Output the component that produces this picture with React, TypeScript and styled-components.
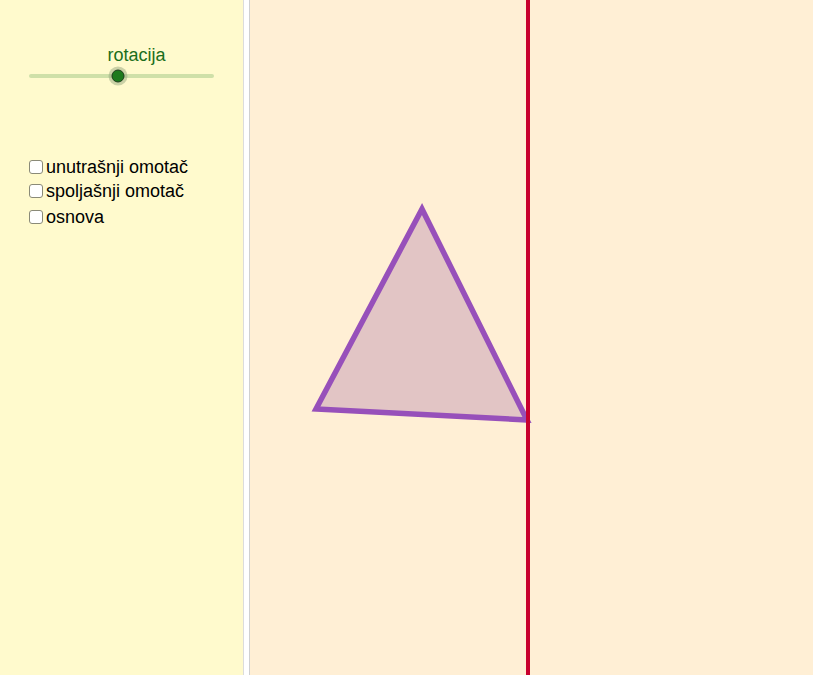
import * as React from "react";
import styled, {createGlobalStyle} from "styled-components";

const GlobalStyle = createGlobalStyle`
	html, body {
		margin: 0;
		padding: 0;
		overflow: hidden;
	}
	body {
		font-family: "Liberation Sans", Arial, sans-serif;
	}
`

const Page = styled.div`
	display: flex;
	width: 813px;
	height: 675px;
`

const SidePanel = styled.div`
	width: 243px;
	flex-shrink: 0;
	background: #fffacd;
	display: flex;
	flex-direction: column;
`

const Divider = styled.div`
	width: 5px;
	flex-shrink: 0;
	background: #ffffff;
	border-left: 1px solid #dcdcdc;
	border-right: 1px solid #d0d0d0;
`

const Canvas = styled.div`
	flex: 1;
	background: #ffefd5;
	position: relative;
	overflow: hidden;
`

const SliderBlock = styled.div`
	margin: 45px 0 0 29px;
	width: 185px;
	display: flex;
	flex-direction: column;
	align-items: center;
`

const SliderLabel = styled.span`
	color: #1b6e1b;
	font-size: 18px;
	line-height: 20px;
	margin-left: 30px;
`

const Track = styled.div`
	position: relative;
	margin-top: 9px;
	width: 185px;
	height: 4px;
	border-radius: 2px;
	background: #cfe0a8;
`

const Knob = styled.div<{ $pos: number }>`
	position: absolute;
	top: 50%;
	left: ${(p) => p.$pos}px;
	width: 11px;
	height: 11px;
	border-radius: 50%;
	background: #1d7a1d;
	border: 1px solid #1a3d1a;
	box-shadow: 0 0 0 3px rgba(140, 160, 120, 0.45);
	transform: translate(-50%, -50%);
`

const Options = styled.div`
	margin: 79px 0 0 29px;
	display: flex;
	flex-direction: column;
	gap: 4px;
`

const OptionRow = styled.label<{ $extra?: number }>`
	display: flex;
	align-items: center;
	gap: 3px;
	margin-top: ${(p) => p.$extra || 0}px;
	font-size: 18px;
	line-height: 20px;
	color: #000;
`

const Box = styled.span`
	width: 12px;
	height: 12px;
	border: 1px solid #8a8a78;
	border-radius: 3px;
	background: #ffffff;
	flex-shrink: 0;
`

const options = ["unutrašnji omotač", "spoljašnji omotač", "osnova"];

const App = () => {
	return (
		<Page>
			<GlobalStyle />

			<SidePanel>
				<SliderBlock>
					<SliderLabel>rotacija</SliderLabel>
					<Track>
						<Knob $pos={89} />
					</Track>
				</SliderBlock>

				<Options>
					{options.map((o, i) => (
						<OptionRow key={o} $extra={i === 2 ? 2 : 0}>
							<Box />
							{o}
						</OptionRow>
					))}
				</Options>
			</SidePanel>

			<Divider />

			<Canvas>
				<svg width="563" height="675" viewBox="0 0 563 675">
					<polygon
						points="172,209 66,409 277,420"
						fill="rgba(165,110,165,0.32)"
						stroke="#9750ba"
						strokeWidth="5.5"
						strokeLinejoin="miter"
					/>
					<line x1="278" y1="0" x2="278" y2="675" stroke="#c8002e" strokeWidth="4" />
				</svg>
			</Canvas>
		</Page>
	)
}

export default App;
